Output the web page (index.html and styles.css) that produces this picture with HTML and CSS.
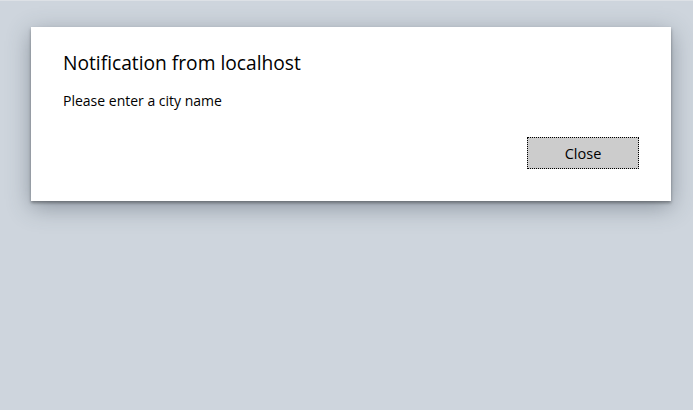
FILE: index.html
```html
<!DOCTYPE html>
<html>
<head>
<meta charset="utf-8">
<link rel="stylesheet" href="styles.css">
</head>
<body>
<div class="page">
  <div class="dialog">
    <div class="title">Notification from localhost</div>
    <div class="message">Please enter a city name</div>
    <div class="actions">
      <button class="close-btn">Close</button>
    </div>
  </div>
</div>
</body>
</html>
```
FILE: styles.css
```css
html, body {
  margin: 0;
  padding: 0;
  width: 693px;
  height: 410px;
  overflow: hidden;
  background: #ced5dd;
}
.page {
  border-top: 1px solid #dde1e6;
  padding: 26px 22px 0 31px;
  font-family: "Open Sans", "Noto Sans", sans-serif;
}
.dialog {
  width: 640px;
  height: 174px;
  box-sizing: border-box;
  background: #fff;
  box-shadow: 0 2px 3px rgba(0,0,0,0.35), 0 6px 22px rgba(60,70,85,0.45);
  padding: 22px 32px 0 32px;
  display: flex;
  flex-direction: column;
}
.title {
  font-size: 19.2px;
  line-height: 28px;
  color: #000;
}
.message {
  font-size: 14px;
  line-height: 20px;
  margin-top: 14px;
  color: #000;
}
.actions {
  display: flex;
  justify-content: flex-end;
  margin-top: 26px;
}
.close-btn {
  width: 112px;
  height: 32px;
  background: #cccccc;
  border: 1px dotted #000;
  font-family: "Open Sans", "Noto Sans", sans-serif;
  font-size: 14.5px;
  color: #000;
  padding: 0;
}
```
